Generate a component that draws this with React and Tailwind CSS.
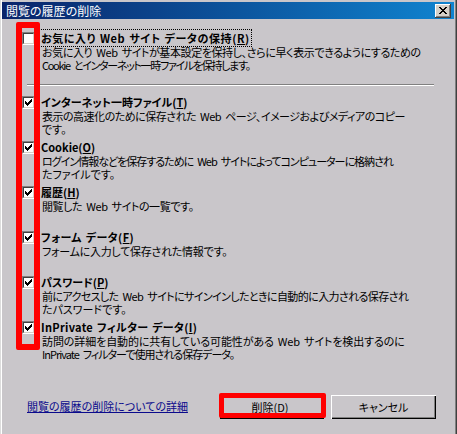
import React from "react";

function Check({ checked }) {
  return (
    <div className="relative w-[13px] h-[13px] shrink-0 bg-white border-t border-l border-t-[#808080] border-l-[#808080] border-b border-r border-b-white border-r-white">
      <div className="absolute inset-0 border-t border-l border-t-[#404040] border-l-[#404040] border-b border-r border-b-[#d4d0c8] border-r-[#d4d0c8] flex items-center justify-center">
        {checked && (
          <svg width="7" height="7" viewBox="0 0 7 7" shapeRendering="crispEdges">
            <path d="M0 2h1v3h-1zM1 3h1v3h-1zM2 4h1v3h-1zM3 3h1v3h-1zM4 2h1v3h-1zM5 1h1v3h-1zM6 0h1v3h-1z" fill="#000" />
          </svg>
        )}
      </div>
    </div>
  );
}

function Key({ children }) {
  return <span className="underline underline-offset-[1px]">{children}</span>;
}

function Sp() {
  return <span className="inline-block w-[4px]"> </span>;
}

function T({ t }) {
  const parts = t.split(" ");
  return (
    <>
      {parts.map((p, i) => (
        <React.Fragment key={i}>
          {i > 0 && <Sp />}
          {p}
        </React.Fragment>
      ))}
    </>
  );
}

function Item({ checked, title, lines }) {
  return (
    <div className="flex h-[45px] pl-[22px]">
      <div className="mt-[1px]">
        <Check checked={checked} />
      </div>
      <div className="ml-[6px] flex flex-col">
        <div className="h-[14px] leading-[14px] font-bold whitespace-nowrap">{title}</div>
        <div className="mt-[1px] leading-[13px] whitespace-nowrap pl-[1px]">
          {lines.map((l, i) => (
            <div key={i} className={"h-[13px] " + l.c}>
              <T t={l.t} />
            </div>
          ))}
        </div>
      </div>
    </div>
  );
}

export default function App() {
  return (
    <div
      className="relative w-[457px] h-[434px] overflow-hidden bg-[#c9c6ca] text-black text-[11px] shadow-[inset_1px_0_0_#dcdcdc,inset_2px_0_0_#ffffff,inset_-1px_0_0_#404040,inset_-2px_0_0_#808080]"
      style={{ fontFamily: '"Noto Sans CJK JP", "Noto Sans", sans-serif', fontFeatureSettings: '"palt"' }}
    >
      {/* title bar */}
      <div className="mx-[2px] mt-[2px] h-[17px] w-[452px] flex items-center justify-between bg-gradient-to-r from-[#0a246a] to-[#1084d0]">
        <span className="pl-[4px] text-white text-[12px] leading-[17px]">閲覧の履歴の削除</span>
        <div className="mr-[3px] w-[16px] h-[14px] bg-[#d4d0c8] flex items-center justify-center shadow-[inset_-1px_-1px_0_#404040,inset_1px_1px_0_#ffffff,inset_-2px_-2px_0_#808080]">
          <svg width="8" height="7" viewBox="0 0 8 7" shapeRendering="crispEdges">
            <path d="M0 0h2v1h-2zM6 0h2v1h-2zM1 1h2v1h-2zM5 1h2v1h-2zM2 2h4v1h-4zM3 3h2v1h-2zM2 4h4v1h-4zM1 5h2v1h-2zM5 5h2v1h-2zM0 6h2v1h-2zM6 6h2v1h-2z" fill="#000" />
          </svg>
        </div>
      </div>

      {/* content */}
      <div className="mt-[12px]">
        <div className="flex h-[41px] pl-[22px]">
          <div className="mt-[1px]">
            <Check checked={false} />
          </div>
          <div className="ml-[6px] flex flex-col">
            <div className="h-[14px] leading-[14px] font-bold whitespace-nowrap">
              <span className="outline outline-1 outline-dotted outline-black outline-offset-0 px-[1px] -ml-[1px] tracking-[0.6px]">
                お気に入り<Sp />Web<Sp />サイト<Sp />データの保持(<Key>R</Key>)
              </span>
            </div>
            <div className="mt-[1px] leading-[13px] whitespace-nowrap pl-[1px]">
              <div className="h-[13px] tracking-[-0.4px]">
                <T t="お気に入り Web サイトが基本設定を保持し、さらに早く表示できるようにするための" />
              </div>
              <div className="h-[13px] tracking-[-1.3px]">
                <T t="Cookie とインターネット一時ファイルを保持します。" />
              </div>
            </div>
          </div>
        </div>

        <div className="ml-[27px] mt-[12px] w-[407px] border-t border-t-[#808080] border-b border-b-white" />

        <div className="mt-[9px]">
          <Item
            checked
            title={<>インターネット一時ファイル(<Key>T</Key>)</>}
            lines={[
              { t: "表示の高速化のために保存された Web ページ、イメージおよびメディアのコピー", c: "tracking-[-0.5px]" },
              { t: "です。", c: "" },
            ]}
          />
          <Item
            checked
            title={<>Cookie(<Key>O</Key>)</>}
            lines={[
              { t: "ログイン情報などを保存するために Web サイトによってコンピューターに格納され", c: "tracking-[-1px]" },
              { t: "たファイルです。", c: "" },
            ]}
          />
          <Item
            checked
            title={<>履歴(<Key>H</Key>)</>}
            lines={[{ t: "閲覧した Web サイトの一覧です。", c: "tracking-[-0.4px]" }]}
          />
          <Item
            checked
            title={<span className="tracking-[0.4px]">フォーム<Sp />データ(<Key>F</Key>)</span>}
            lines={[{ t: "フォームに入力して保存された情報です。", c: "tracking-[-0.25px]" }]}
          />
          <Item
            checked
            title={<>パスワード(<Key>P</Key>)</>}
            lines={[
              { t: "前にアクセスした Web サイトにサインインしたときに自動的に入力される保存され", c: "tracking-[-0.6px]" },
              { t: "たパスワードです。", c: "" },
            ]}
          />
          <Item
            checked
            title={<span className="tracking-[0.3px]">InPrivate<Sp />フィルター<Sp />データ(<Key>I</Key>)</span>}
            lines={[
              { t: "訪問の詳細を自動的に共有している可能性がある Web サイトを検出するのに", c: "tracking-[-0.1px]" },
              { t: "InPrivate フィルターで使用される保存データ。", c: "tracking-[-1px]" },
            ]}
          />
        </div>

        {/* bottom row */}
        <div className="mt-[30px] flex items-center h-[24px] pl-[27px] pr-[21px]">
          <span className="text-[#0a0a8c] underline underline-offset-[1px] whitespace-nowrap -mt-[2px]">閲覧の履歴の削除についての詳細</span>
          <div className="ml-auto flex gap-[7px]">
            <div className="relative">
              <button className="w-[104px] h-[24px] bg-[#c9c6ca] border border-black shadow-[inset_1px_1px_0_#ffffff,inset_-1px_-1px_0_#404040,inset_-2px_-2px_0_#808080] flex items-center justify-center pr-[4px]">
                削除(<Key>D</Key>)
              </button>
              <div className="absolute -left-[1px] -top-[2px] -right-[2px] bottom-[1px] border-[5px] border-[#ff0000] rounded-[2px]" />
            </div>
            <button className="w-[105px] h-[24px] bg-[#c9c6ca] shadow-[inset_1px_1px_0_#ffffff,inset_-1px_-1px_0_#000000,inset_-2px_-2px_0_#808080] flex items-center justify-center">
              キャンセル
            </button>
          </div>
        </div>
      </div>

      {/* red highlight over checkboxes */}
      <div className="absolute left-[16px] top-[22px] w-[24px] h-[328px] border-[6px] border-[#ff0000] rounded-[2px]" />
    </div>
  );
}
